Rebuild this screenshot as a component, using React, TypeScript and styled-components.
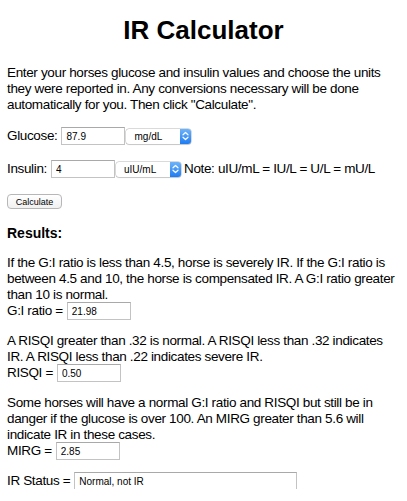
import React from "react";
import styled, { createGlobalStyle } from "styled-components";

const GlobalStyle = createGlobalStyle`
  html, body {
    margin: 0;
    padding: 0;
    background: #ffffff;
  }
`;

const App = () => {
  return (
    <Page>
      <GlobalStyle />
      <Title>IR Calculator</Title>
      <Intro>
        Enter your horses glucose and insulin values and choose the units they
        were reported in. Any conversions necessary will be done automatically
        for you. Then click "Calculate".
      </Intro>

      <FormRow $top={14}>
        <Label>Glucose:</Label>
        <Field value="87.9" readOnly />
        <Select>
          <SelectText>mg/dL</SelectText>
          <Stepper>
            <Chevrons />
          </Stepper>
        </Select>
      </FormRow>

      <FormRow $top={15}>
        <Label>Insulin:</Label>
        <Field value="4" readOnly />
        <Select>
          <SelectText>uIU/mL</SelectText>
          <Stepper>
            <Chevrons />
          </Stepper>
        </Select>
        <Note>Note: uIU/mL = IU/L = U/L = mU/L</Note>
      </FormRow>

      <Button>Calculate</Button>

      <Heading>Results:</Heading>

      <Section>
        <Text>
          If the G:I ratio is less than 4.5, horse is severely IR. If the G:I
          ratio is between 4.5 and 10, the horse is compensated IR. A G:I ratio
          greater than 10 is normal.
        </Text>
        <ResultRow>
          <Label>G:I ratio =</Label>
          <Field value="21.98" readOnly />
        </ResultRow>
      </Section>

      <Section>
        <Text>
          A RISQI greater than .32 is normal. A RISQI less than .32 indicates
          IR. A RISQI less than .22 indicates severe IR.
        </Text>
        <ResultRow>
          <Label>RISQI =</Label>
          <Field value="0.50" readOnly />
        </ResultRow>
      </Section>

      <Section>
        <Text>
          Some horses will have a normal G:I ratio and RISQI but still be in
          danger if the glucose is over 100. An MIRG greater than 5.6 will
          indicate IR in these cases.
        </Text>
        <ResultRow>
          <Label>MIRG =</Label>
          <Field value="2.85" readOnly />
        </ResultRow>
      </Section>

      <Section>
        <ResultRow>
          <Label>IR Status =</Label>
          <Field value="Normal, not IR" readOnly $wide />
        </ResultRow>
      </Section>
    </Page>
  );
};

const Chevrons = () => (
  <svg width="7" height="10" viewBox="0 0 7 10">
    <path
      d="M1 3.8 L3.5 1.5 L6 3.8 M1 6.2 L3.5 8.5 L6 6.2"
      fill="none"
      stroke="#ffffff"
      strokeWidth="1.2"
      strokeLinecap="round"
      strokeLinejoin="round"
    />
  </svg>
);

export default App;

const Page = styled.div`
  padding: 0 7px;
  font-family: "Liberation Sans", Arial, sans-serif;
  font-size: 13.5px;
  letter-spacing: -0.35px;
  line-height: 16px;
  color: #000000;
`;

const Title = styled.h1`
  margin: 15px 0 0;
  font-size: 26px;
  line-height: 30px;
  font-weight: bold;
  letter-spacing: 0;
  text-align: center;
`;

const Intro = styled.p`
  margin: 20px 0 0;
`;

const FormRow = styled.div<{ $top: number }>`
  display: flex;
  align-items: center;
  margin-top: ${(p) => p.$top}px;
  height: 18px;
`;

const Label = styled.span`
  margin-right: 4px;
  white-space: nowrap;
`;

const Field = styled.input<{ $wide?: boolean }>`
  box-sizing: border-box;
  flex-shrink: 0;
  width: ${(p) => (p.$wide ? 223 : 64)}px;
  height: 18px;
  margin: 0;
  padding: 0 4px;
  border: 1px solid #c3c3c3;
  border-top-color: #a9a9a9;
  font-family: "Liberation Sans", Arial, sans-serif;
  font-size: 10px;
  letter-spacing: 0;
  color: #000000;
  background: #ffffff;
  outline: none;
`;

const Select = styled.div`
  box-sizing: border-box;
  display: flex;
  align-items: stretch;
  flex-shrink: 0;
  width: 65px;
  height: 15px;
  margin-left: 1px;
  border-radius: 3px;
  background: #ffffff;
  box-shadow: 0 0 0 0.5px #b5b5b5, 0 1px 1px rgba(0, 0, 0, 0.15);
  overflow: hidden;
`;

const SelectText = styled.span`
  flex: 1;
  padding-left: 8px;
  font-size: 10px;
  letter-spacing: 0;
  line-height: 15px;
`;

const Stepper = styled.span`
  display: flex;
  align-items: center;
  justify-content: center;
  width: 11px;
  background: linear-gradient(#6cb3fa, #1f7cf2);
`;

const Note = styled.span`
  margin-left: 3px;
  white-space: nowrap;
`;

const Button = styled.button`
  display: block;
  box-sizing: border-box;
  margin: 16px 0 0;
  width: 55px;
  height: 15px;
  padding: 0;
  border: 1px solid #b7b7b7;
  border-radius: 4px;
  background: linear-gradient(#ffffff, #f1f1f1);
  font-family: "Liberation Sans", Arial, sans-serif;
  font-size: 9px;
  color: #000000;
`;

const Heading = styled.h3`
  margin: 16px 0 0;
  font-size: 14px;
  line-height: 16px;
  font-weight: bold;
  letter-spacing: 0;
`;

const Section = styled.div`
  margin-top: 14px;
`;

const Text = styled.p`
  margin: 0;
`;

const ResultRow = styled.div`
  display: flex;
  align-items: center;
  height: 16px;
`;
